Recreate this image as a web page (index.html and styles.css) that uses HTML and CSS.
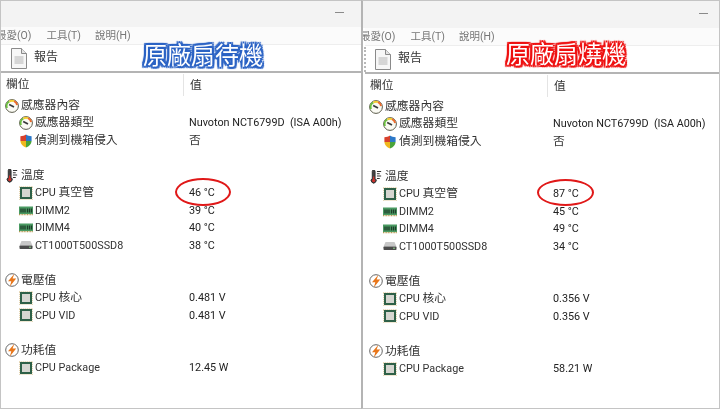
FILE: index.html
```html
<!DOCTYPE html>
<html lang="zh-Hant">
<head>
<meta charset="utf-8">
<title>原廠扇待機 / 原廠扇燒機</title>
<link rel="stylesheet" href="styles.css">
</head>
<body>
<svg class="defs" width="0" height="0" aria-hidden="true">
  <defs>
    <symbol id="gauge" viewBox="0 0 14 14">
      <circle cx="7" cy="7" r="6.4" fill="#fbfbf4" stroke="#5c5c4c" stroke-width="1"/>
      <path d="M2 9A5.200 5.200 0 0 1 4.400 2.500" fill="none" stroke="#6abf3e" stroke-width="1.900"/>
      <path d="M4.400 2.500A5.200 5.200 0 0 1 9 2.200" fill="none" stroke="#f2cb30" stroke-width="1.900"/>
      <path d="M9 2.200A5.200 5.200 0 0 1 12.100 6" fill="none" stroke="#ec6a2a" stroke-width="1.900"/>
      <path d="M4.200 5.400L9 8" stroke="#3a3a3a" stroke-width="1.700"/>
    </symbol>
    <symbol id="shield" viewBox="0 0 14 15">
      <path d="M7 .6C5.400 1.800 3.200 2.400 1 2.400V7.400H7Z" fill="#d8402c"/>
      <path d="M7 .6C8.600 1.800 10.800 2.400 13 2.400V7.400H7Z" fill="#2c78c8"/>
      <path d="M1 7.400C1.300 10.800 3.600 13 7 14.500V7.400Z" fill="#f0b81e"/>
      <path d="M13 7.400C12.700 10.800 10.400 13 7 14.500V7.400Z" fill="#4aa43a"/>
    </symbol>
    <symbol id="thermo" viewBox="0 0 14 15">
      <path d="M3 1.500A1.500 1.500 0 0 1 6 1.500V9A2.700 2.700 0 1 1 3 9Z" fill="#444" stroke="#2c2c2c" stroke-width="1"/>
      <path d="M4.500 7V11" stroke="#d0302a" stroke-width="1.400"/>
      <circle cx="4.500" cy="11.300" r="1.700" fill="#d0302a"/>
      <path d="M8 1.500H12.500M8 4H11M8 6.500H12.500M8 9H11" stroke="#333" stroke-width="1.100"/>
    </symbol>
    <symbol id="cpu" viewBox="0 0 14 14">
      <rect x=".3" y=".3" width="13.400" height="13.400" fill="none" stroke="#c09a4a" stroke-width=".6" stroke-dasharray="1 1"/>
      <rect x="1" y="1" width="12" height="12" fill="#2f6148"/>
      <rect x="3" y="3" width="8" height="8" fill="#d6d6d0"/>
    </symbol>
    <symbol id="ram" viewBox="0 0 14 9">
      <rect x="0" y="0" width="14" height="7.500" fill="#4a9a62"/>
      <path d="M2 2V6M4 2V6M6 2V6M8.500 2V6M10.500 2V6M12.500 2V6" stroke="#1e3d2a" stroke-width="1.300"/>
      <path d="M0 8.200H14" stroke="#b59a52" stroke-width="1.200" stroke-dasharray="1 .6"/>
    </symbol>
    <symbol id="disk" viewBox="0 0 14 9">
      <path d="M2.500 .5H11.500L13.500 5H.5Z" fill="#c8c8c8"/>
      <rect x=".5" y="5" width="13" height="3.500" rx=".8" fill="#4c4c4c"/>
      <rect x="10" y="6.200" width="2" height="1" fill="#8fd08a"/>
    </symbol>
    <symbol id="volt" viewBox="0 0 14 14">
      <circle cx="7" cy="7" r="6.300" fill="#fff" stroke="#666" stroke-width="1"/>
      <path d="M9.400 .8L3 8.200H6.300L4.800 13.400L11.200 5.600H7.600Z" fill="#e8761a"/>
    </symbol>
    <symbol id="doc" viewBox="0 0 16 21">
      <path d="M.5 .5H10.500L15.500 5.500V20.500H.5Z" fill="#f7f7f7" stroke="#8a8a8a"/>
      <path d="M10.500 .5V5.500H15.500" fill="#e4e4e4" stroke="#8a8a8a"/>
      <path d="M3.500 9H12.500M3.500 11H12.500M3.500 13H12.500M3.500 15H12.500" stroke="#b4b4b4"/>
    </symbol>
  </defs>
</svg>

<main class="stage">
  <section class="panel panel-left">
    <header class="titlebar"><span class="minimize"></span></header>
    <nav class="menubar"><span class="menu-clip">最愛(O)</span><span>工具(T)</span><span>說明(H)</span></nav>
    <div class="toolbar">
      <svg class="doc-icon"><use href="#doc"/></svg><span class="report">報告</span>
      <span class="stamp stamp-blue">原廠扇待機</span>
    </div>
    <div class="columns"><span class="col-field">欄位</span><span class="col-value">值</span></div>
    <div class="list">
      <div class="row group"><svg class="ico"><use href="#gauge"/></svg><span class="name"><b class="zh">感應器內容</b></span></div>
      <div class="row child"><svg class="ico"><use href="#gauge"/></svg><span class="name"><b class="zh">感應器類型</b></span><span class="val">Nuvoton NCT6799D&nbsp; (ISA A00h)</span></div>
      <div class="row child"><svg class="ico"><use href="#shield"/></svg><span class="name"><b class="zh">偵測到機箱侵入</b></span><span class="val"><b class="zh">否</b></span></div>
      <div class="row spacer"></div>
      <div class="row group"><svg class="ico"><use href="#thermo"/></svg><span class="name"><b class="zh">溫度</b></span></div>
      <div class="row child"><svg class="ico"><use href="#cpu"/></svg><span class="name">CPU <b class="zh">真空管</b></span><span class="val circled">46 °C</span></div>
      <div class="row child"><svg class="ico"><use href="#ram"/></svg><span class="name">DIMM2</span><span class="val">39 °C</span></div>
      <div class="row child"><svg class="ico"><use href="#ram"/></svg><span class="name">DIMM4</span><span class="val">40 °C</span></div>
      <div class="row child"><svg class="ico"><use href="#disk"/></svg><span class="name">CT1000T500SSD8</span><span class="val">38 °C</span></div>
      <div class="row spacer"></div>
      <div class="row group"><svg class="ico"><use href="#volt"/></svg><span class="name"><b class="zh">電壓值</b></span></div>
      <div class="row child"><svg class="ico"><use href="#cpu"/></svg><span class="name">CPU <b class="zh">核心</b></span><span class="val">0.481 V</span></div>
      <div class="row child"><svg class="ico"><use href="#cpu"/></svg><span class="name">CPU VID</span><span class="val">0.481 V</span></div>
      <div class="row spacer"></div>
      <div class="row group"><svg class="ico"><use href="#volt"/></svg><span class="name"><b class="zh">功耗值</b></span></div>
      <div class="row child"><svg class="ico"><use href="#cpu"/></svg><span class="name">CPU Package</span><span class="val">12.45 W</span></div>
    </div>
  </section>

  <section class="panel panel-right">
    <header class="titlebar"><span class="minimize"></span></header>
    <nav class="menubar"><span class="menu-clip">最愛(O)</span><span>工具(T)</span><span>說明(H)</span></nav>
    <div class="toolbar">
      <svg class="doc-icon"><use href="#doc"/></svg><span class="report">報告</span>
      <span class="stamp stamp-red">原廠扇燒機</span>
    </div>
    <div class="columns"><span class="col-field">欄位</span><span class="col-value">值</span></div>
    <div class="list">
      <div class="row group"><svg class="ico"><use href="#gauge"/></svg><span class="name"><b class="zh">感應器內容</b></span></div>
      <div class="row child"><svg class="ico"><use href="#gauge"/></svg><span class="name"><b class="zh">感應器類型</b></span><span class="val">Nuvoton NCT6799D&nbsp; (ISA A00h)</span></div>
      <div class="row child"><svg class="ico"><use href="#shield"/></svg><span class="name"><b class="zh">偵測到機箱侵入</b></span><span class="val"><b class="zh">否</b></span></div>
      <div class="row spacer"></div>
      <div class="row group"><svg class="ico"><use href="#thermo"/></svg><span class="name"><b class="zh">溫度</b></span></div>
      <div class="row child"><svg class="ico"><use href="#cpu"/></svg><span class="name">CPU <b class="zh">真空管</b></span><span class="val circled">87 °C</span></div>
      <div class="row child"><svg class="ico"><use href="#ram"/></svg><span class="name">DIMM2</span><span class="val">45 °C</span></div>
      <div class="row child"><svg class="ico"><use href="#ram"/></svg><span class="name">DIMM4</span><span class="val">49 °C</span></div>
      <div class="row child"><svg class="ico"><use href="#disk"/></svg><span class="name">CT1000T500SSD8</span><span class="val">34 °C</span></div>
      <div class="row spacer"></div>
      <div class="row group"><svg class="ico"><use href="#volt"/></svg><span class="name"><b class="zh">電壓值</b></span></div>
      <div class="row child"><svg class="ico"><use href="#cpu"/></svg><span class="name">CPU <b class="zh">核心</b></span><span class="val">0.356 V</span></div>
      <div class="row child"><svg class="ico"><use href="#cpu"/></svg><span class="name">CPU VID</span><span class="val">0.356 V</span></div>
      <div class="row spacer"></div>
      <div class="row group"><svg class="ico"><use href="#volt"/></svg><span class="name"><b class="zh">功耗值</b></span></div>
      <div class="row child"><svg class="ico"><use href="#cpu"/></svg><span class="name">CPU Package</span><span class="val">58.21 W</span></div>
    </div>
  </section>
</main>
</body>
</html>
```

FILE: styles.css
```css
* { box-sizing: border-box; }
html, body { margin: 0; padding: 0; }
body {
  width: 720px;
  height: 409px;
  overflow: hidden;
  background: #fff;
  color: #222;
  font: 10.800px/17.500px Roboto, "Noto Sans CJK TC", sans-serif;
}
.defs { position: absolute; }
.stage {
  display: flex;
  width: 720px;
  height: 409px;
  filter: blur(.3px);
}
.zh { font-size: 11.800px; font-weight: 400; color: #333; }
.panel {
  position: relative;
  height: 409px;
  border-top: 1px solid #c4c4c4;
  border-bottom: 1px solid #c4c4c4;
  overflow: hidden;
}
.panel-left { width: 361px; border-left: 1px solid #c4c4c4; }
.panel-right {
  width: 359px;
  border-left: 2px solid #b4b4b4;
  border-right: 1px solid #c4c4c4;
}
.panel-right > :not(.titlebar) { margin-left: 2px; }
.titlebar {
  position: relative;
  height: 26px;
  background: #f3f3f3;
}
.panel-right .titlebar { height: 27px; }
.minimize {
  position: absolute;
  right: 17px;
  top: 11px;
  width: 9px;
  height: 1px;
  background: #8a8a8a;
}
.panel-right .minimize { right: 11px; top: 12px; }
.menubar {
  display: flex;
  gap: 14px;
  height: 18px;
  line-height: 18px;
  font-size: 10.500px;
  color: #777;
  background: #fbfbfb;
  border-bottom: 1px solid #eee;
}
.menu-clip { margin-left: -5px; }
.menubar > span:nth-child(2) { margin-left: 1px; }
.toolbar {
  position: relative;
  display: flex;
  align-items: center;
  height: 28px;
  padding-left: 10px;
  border-bottom: 2px solid #b4b4b4;
  background: #fff;
}
.panel-right .toolbar::before {
  content: "";
  position: absolute;
  left: -1px;
  top: 1px;
  height: 25px;
  border-left: 2px dotted #b8b8b8;
}
.doc-icon { width: 16px; height: 21px; }
.report { margin-left: 7px; font-size: 12px; color: #333; }
.stamp {
  position: absolute;
  left: 142px;
  top: -3px;
  font-size: 24px;
  line-height: 28px;
  white-space: nowrap;
  color: #fff;
  z-index: 1;
}
.stamp-blue {
  text-shadow: 2px 0 0 #2a62c4, -2px 0 0 #2a62c4, 0 2px 0 #2a62c4, 0 -2px 0 #2a62c4,
    2px 2px 1px #2a62c4, -2px 2px 1px #2a62c4, 2px -2px 1px #2a62c4, -2px -2px 1px #2a62c4;
}
.stamp-red {
  left: 141px;
  top: -5px;
  text-shadow: 2px 0 0 #ee1010, -2px 0 0 #ee1010, 0 2px 0 #ee1010, 0 -2px 0 #ee1010,
    2px 2px 1px #ee1010, -2px 2px 1px #ee1010, 2px -2px 1px #ee1010, -2px -2px 1px #ee1010;
}
.columns {
  display: flex;
  height: 24px;
  align-items: center;
  padding-left: 5px;
  font-size: 11.800px;
  color: #333;
}
.col-field { width: 177px; }
.col-value {
  padding-left: 6px;
  border-left: 1px solid #e4e4e4;
  line-height: 22px;
}
.list { display: flex; flex-direction: column; }
.row {
  display: flex;
  align-items: center;
  height: 17.470px;
  white-space: nowrap;
}
.group { padding-left: 4px; }
.child { padding-left: 18px; }
.ico { flex: none; width: 14px; height: 14px; margin-right: 2px; }
.name { flex: none; color: #333; }
.child .name { width: 154px; }
.val { position: relative; color: #222; }
.circled::after {
  content: "";
  position: absolute;
  left: -14px;
  top: -6px;
  width: 52px;
  height: 24px;
  border: 2px solid #e01818;
  border-radius: 50%;
}
.panel-right .circled::after { left: -16px; width: 53px; height: 23px; }
```
